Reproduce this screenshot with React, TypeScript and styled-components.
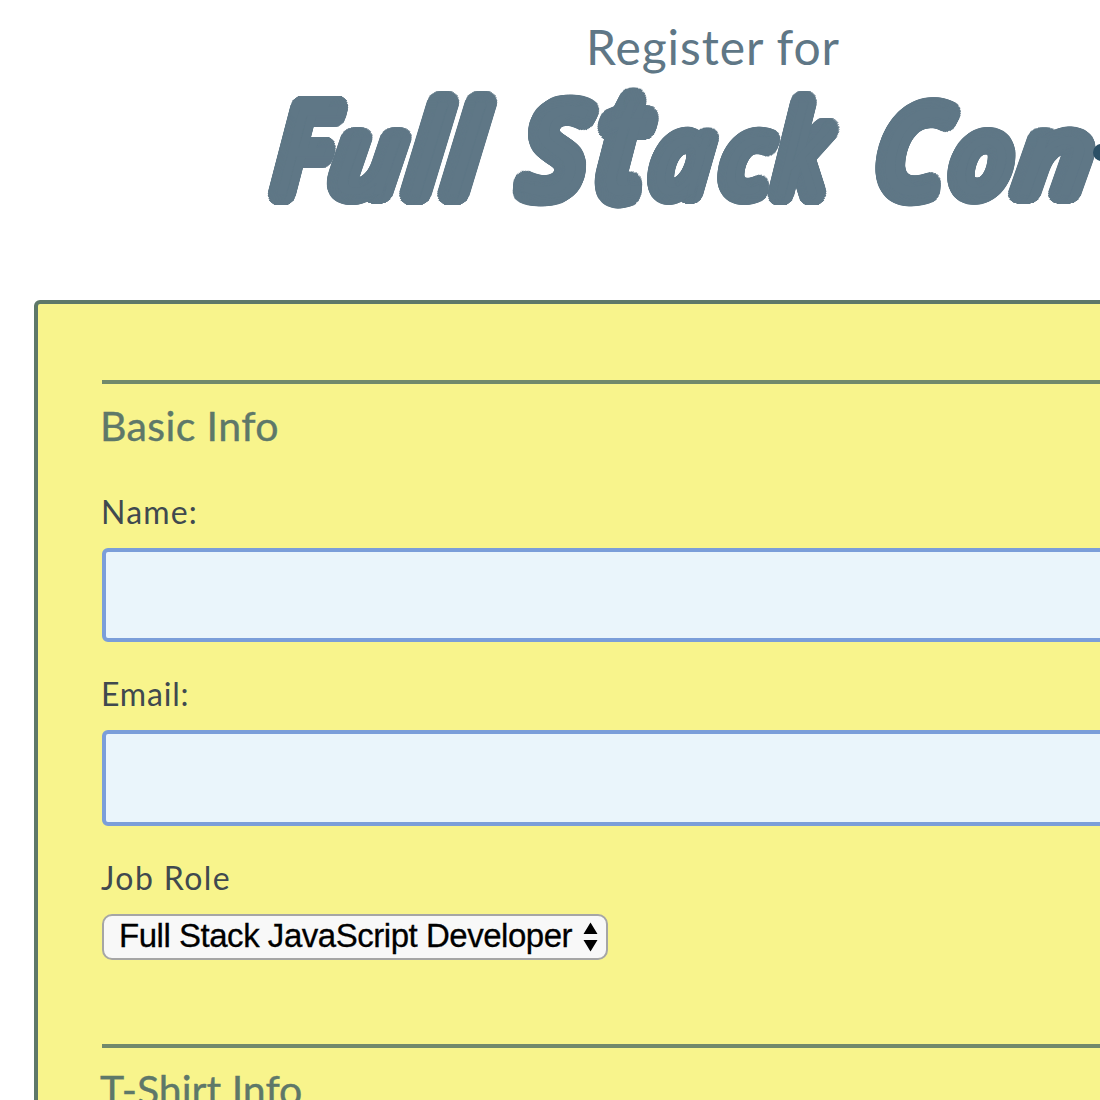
import React from "react";
import styled, { createGlobalStyle } from "styled-components";

const SLATE = "#5f7786";
const GREEN = "#5e7869";

/* Rings of hard shadows thicken the lettering and round off its corners. */
const brush = (radius: number) =>
  [radius, radius * 0.8, radius * 0.5]
    .flatMap((r) =>
      Array.from({ length: 40 }, (_, i) => {
        const a = (i / 40) * Math.PI * 2;
        return `${(Math.cos(a) * r).toFixed(2)}px ${(Math.sin(a) * r).toFixed(2)}px 0 ${SLATE}`;
      })
    )
    .join(", ");

const GlobalStyle = createGlobalStyle`
  * { box-sizing: border-box; }
  body { margin: 0; background: #fff; overflow: hidden; }
`;

const Viewport = styled.div`
  height: 1100px;
  overflow: hidden;
  font-family: Lato, "Open Sans", sans-serif;
`;

const Page = styled.main`
  width: 1426px;
  padding: 19px 34px 0;
`;

const Header = styled.header`
  height: 281px;
  color: ${SLATE};
`;

const Kicker = styled.p`
  margin: 0;
  text-align: center;
  font-size: 48px;
  line-height: 56px;
  letter-spacing: 0.9px;
`;

const Title = styled.h1`
  position: relative;
  display: flex;
  margin: 0;
  padding-left: 239px;
  height: 150px;
  font: italic 400 122px/144px "Open Sans", sans-serif;
`;

const Word = styled.span`
  display: flex;
  flex: none;
`;

const Glyph = styled.span<{ $w: number; $sx: number; $sy: number }>`
  flex: none;
  width: ${(p) => p.$w}px;
  white-space: nowrap;
  transform: scale(${(p) => p.$sx}, ${(p) => p.$sy}) skewX(-5deg);
  transform-origin: 0 119px;
  text-shadow: ${brush(11.2)};
`;

/* letter, advance, horizontal scale, vertical scale */
type Stroke = [string, number, number, number];
const WORDS: Stroke[][] = [
  [["F", 57, 0.87, 1], ["u", 77, 0.98, 0.87], ["l", 38, 1, 0.99], ["l", 76, 1, 0.99]],
  [["S", 77, 0.96, 1], ["t", 52, 1, 1.16], ["a", 70, 0.83, 0.86], ["c", 54, 0.83, 0.86], ["k", 101, 0.82, 0.99]],
  [["C", 75, 0.9, 0.97], ["o", 66, 0.84, 0.86], ["n", 90, 1, 0.86]],
];

const Overlap = styled.i`
  position: absolute;
  left: 1059px;
  top: 69px;
  width: 17px;
  height: 17px;
  border-radius: 50%;
  background: #2c5066;
`;

const Form = styled.form`
  height: 900px;
  padding: 76px 64px 0;
  border: 4px solid ${GREEN};
  border-radius: 6px;
  background: #f8f48c;
`;

const Fieldset = styled.section<{ $h: number }>`
  display: flex;
  flex-direction: column;
  align-items: flex-start;
  height: ${(p) => p.$h}px;
  border-top: 4px solid #71896b;
`;

const Legend = styled.h2<{ $track: number }>`
  margin: 15px 0 40px -2px;
  color: ${GREEN};
  font-size: 41px;
  font-weight: 400;
  line-height: 54px;
  letter-spacing: ${(p) => p.$track}px;
  -webkit-text-stroke: 0.4px ${GREEN};
`;

const Label = styled.label<{ $track: number }>`
  height: 55px;
  margin-left: -1px;
  color: #40494f;
  font-size: 32px;
  line-height: 38px;
  letter-spacing: ${(p) => p.$track}px;
`;

const Input = styled.input<{ $h: number }>`
  flex: none;
  width: 100%;
  height: ${(p) => p.$h}px;
  margin: 0 0 33px;
  border: 4px solid #7b9ed9;
  border-radius: 6px;
  background: #eaf5fb;
  outline: none;
`;

const Select = styled.button`
  display: flex;
  align-items: center;
  justify-content: space-between;
  width: 506px;
  height: 46px;
  padding: 0 8px 2px 15px;
  border: 2px solid #a6a6a6;
  border-radius: 10px;
  background: #f8f8f8;
  color: #000;
  font: 33px/42px "Liberation Sans", Arial, sans-serif;
  letter-spacing: -0.47px;
  white-space: nowrap;
  -webkit-text-stroke: 0.3px #000;
`;

const Arrows = styled.svg`
  flex: none;
  width: 15px;
  height: 30px;
  margin-top: 2px;
`;

export default function App() {
  return (
    <Viewport>
      <GlobalStyle />
      <Page>
        <Header>
          <Kicker>Register for</Kicker>
          <Title>
            {WORDS.map((word, i) => (
              <Word key={i}>
                {word.map(([char, w, sx, sy], j) => (
                  <Glyph key={j} $w={w} $sx={sx} $sy={sy}>{char}</Glyph>
                ))}
              </Word>
            ))}
            <Overlap />
          </Title>
        </Header>
        <Form>
          <Fieldset $h={664}>
            <Legend $track={0.4}>Basic Info</Legend>
            <Label $track={1.2}>Name:</Label>
            <Input $h={94} aria-label="Name" />
            <Label $track={0.8}>Email:</Label>
            <Input $h={96} aria-label="Email" />
            <Label $track={1.4}>Job Role</Label>
            <Select type="button">
              Full Stack JavaScript Developer
              <Arrows viewBox="0 0 15 30">
                <path d="M7.5 0.5 14.5 12H0.5ZM0.5 18H14.5L7.5 29.5Z" />
              </Arrows>
            </Select>
          </Fieldset>
          <Fieldset $h={200}>
            <Legend $track={0}>T-Shirt Info</Legend>
          </Fieldset>
        </Form>
      </Page>
    </Viewport>
  );
}
